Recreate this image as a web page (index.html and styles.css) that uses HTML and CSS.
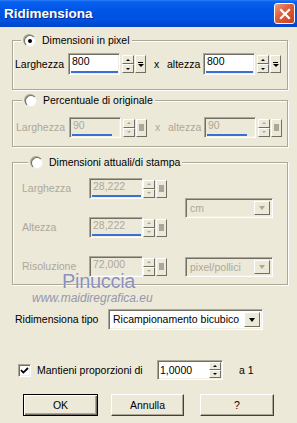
FILE: index.html
```html
<!DOCTYPE html>
<html>
  <head>
    <meta charset="utf-8">
    <link rel="stylesheet" href="styles.css">
  </head>

  <body>
    <div class="win">
      <div class="titlebar">
        <span class="title">Ridimensiona</span>
        <span class="close">
          <svg width="18" height="18" viewBox="0 0 18 18"><path d="M5 5L13 13M13 5L5 13" stroke="#fff" stroke-width="2.2" stroke-linecap="square"/></svg>
        </span>
      </div>

      <div class="content">
        <!-- pixel size -->
        <fieldset class="group g1">
          <legend><span class="radio on"></span>Dimensioni in pixel</legend>
          <div class="row">
            <span class="lbl">Larghezza</span>
            <div class="field">
              <div class="box"><span class="val">800</span><i class="bar"></i></div>
              <div class="spin"><b class="up"></b><b class="dn"></b></div>
              <div class="sq"></div>
            </div>
            <span class="x">x</span><span class="lbl2">altezza</span>
            <div class="field">
              <div class="box"><span class="val">800</span><i class="bar"></i></div>
              <div class="spin"><b class="up"></b><b class="dn"></b></div>
              <div class="sq"></div>
            </div>
          </div>
        </fieldset>

        <!-- percent -->
        <fieldset class="group g2 dis">
          <legend><span class="radio"></span>Percentuale di originale</legend>
          <div class="row">
            <span class="lbl">Larghezza</span>
            <div class="field">
              <div class="box"><span class="val">90</span><i class="bar short"></i></div>
              <div class="spin"><b class="up"></b><b class="dn"></b></div>
              <div class="sq"></div>
            </div>
            <span class="x">x</span><span class="lbl2">altezza</span>
            <div class="field">
              <div class="box"><span class="val">90</span><i class="bar short"></i></div>
              <div class="spin"><b class="up"></b><b class="dn"></b></div>
              <div class="sq"></div>
            </div>
          </div>
        </fieldset>

        <!-- print size -->
        <fieldset class="group g3 dis">
          <legend><span class="radio"></span>Dimensioni attuali/di stampa</legend>
          <div class="cols">
            <div class="leftcol">
              <div class="row">
                <span class="lbl">Larghezza</span>
                <div class="field">
                  <div class="box"><span class="val">28,222</span><i class="bar"></i></div>
                  <div class="spin"><b class="up"></b><b class="dn"></b></div>
                  <div class="sq"></div>
                </div>
              </div>
              <div class="row">
                <span class="lbl">Altezza</span>
                <div class="field">
                  <div class="box"><span class="val">28,222</span><i class="bar"></i></div>
                  <div class="spin"><b class="up"></b><b class="dn"></b></div>
                  <div class="sq"></div>
                </div>
              </div>
              <div class="row">
                <span class="lbl">Risoluzione</span>
                <div class="field">
                  <div class="box"><span class="val">72,000</span></div>
                  <div class="spin"><b class="up"></b><b class="dn"></b></div>
                  <div class="sq"></div>
                </div>
              </div>
            </div>
            <div class="rightcol">
              <div class="combo unit"><span class="txt">cm</span><span class="arr"></span></div>
              <div class="combo unit res"><span class="txt">pixel/pollici</span><span class="arr"></span></div>
            </div>
          </div>
        </fieldset>

        <div class="tipo">
          <span class="tipolbl">Ridimensiona tipo</span>
          <div class="combo main"><span class="txt">Ricampionamento bicubico</span><span class="arr"></span></div>
        </div>

        <div class="prop">
          <span class="check">
            <svg width="9" height="9" viewBox="0 0 9 9"><path d="M1 4.2L3.4 6.6L8 2" fill="none" stroke="#000" stroke-width="1.8"/></svg>
          </span>
          <span class="proplbl">Mantieni proporzioni di</span>
          <div class="box ratio">
            <span class="val">1,0000</span>
            <div class="spin"><b class="up"></b><b class="dn"></b></div>
          </div>
          <span class="a1">a 1</span>
        </div>

        <div class="btns">
          <span class="btn ok">OK</span>
          <span class="btn cancel">Annulla</span>
          <span class="btn help">?</span>
        </div>
      </div>

      <div class="wm1">Pinuccia</div>
      <div class="wm2">www.maidiregrafica.eu</div>
    </div>
  </body>
</html>
```

FILE: styles.css
```css
body {
  margin: 0;
  background-color: #ece9d8;
  font-family: "Liberation Sans", Arial, sans-serif;
  font-size: 10.5px;
  line-height: 13px;
  color: black;
  white-space: nowrap;
}

.win {
  position: relative;
  width: 297px;
  height: 423px;
  overflow: hidden;
}

/* title bar */
.titlebar {
  height: 27px;
  display: flex;
  align-items: center;
  padding-left: 4px;
  background: linear-gradient(#2a7cf5 0, #0860ee 2px, #0055e5 35%, #0052e0 75%, #0044c8 100%);
}

.title {
  color: white;
  font-weight: bold;
  font-size: 13.5px;
  text-shadow: 1px 1px #0a2a8a;
}

.close {
  margin-left: auto;
  margin-right: 2px;
  width: 19px;
  height: 19px;
  display: flex;
  align-items: center;
  justify-content: center;
  border: 1px solid white;
  border-radius: 3px;
  background: linear-gradient(135deg, #f09a80 0, #e0613f 40%, #c83d1c 100%);
}

.content {
  padding: 0 9px 0 12px;
}

/* group boxes */
.group {
  margin: 0;
  min-width: 0;
  border: 1px solid #aca899;
  box-shadow: inset 1px 1px 0 white, 1px 1px 0 white;
}

.group legend {
  display: flex;
  align-items: center;
  height: 13px;
  margin-left: 6px;
  padding: 0 2px 0 3px;
  background-color: #ece9d8;
}

.g1 {
  margin-top: 7px;
  padding: 6px 0 14px 2px;
}

.g2 {
  margin-top: 4px;
  padding: 10px 0 8px 3px;
}

.g3 {
  margin-top: 9px;
  padding: 9px 0 7px 9px;
}

.radio {
  width: 10px;
  height: 10px;
  margin-right: 6px;
  border-radius: 50%;
  background-color: white;
  border: 1px solid;
  border-color: #716f64 #f1efe2 #f1efe2 #716f64;
  box-shadow: -1px -1px 0 #aca899;
  display: flex;
  align-items: center;
  justify-content: center;
}

.radio.on::after {
  content: "";
  width: 4px;
  height: 4px;
  border-radius: 50%;
  background-color: black;
}

.row {
  display: flex;
  align-items: center;
  height: 22px;
}

.g2 .row {
  height: 21px;
}

.lbl {
  width: 53px;
}

.x {
  width: 13px;
  margin-left: 8px;
}

.lbl2 {
  width: 36px;
}

.dis .lbl,
.dis .x,
.dis .lbl2,
.dis .val {
  color: #aca899;
}

/* spin field */
.field {
  display: flex;
  align-items: center;
  height: 100%;
}

.box {
  box-sizing: border-box;
  width: 52px;
  height: 100%;
  display: flex;
  flex-direction: column;
  justify-content: space-between;
  background-color: white;
  border: 1px solid;
  border-color: #aca899 white white #aca899;
  box-shadow: inset 1px 1px 0 #716f64, inset -1px -1px 0 #f1efe2;
}

.dis .box {
  background-color: #ece9d8;
}

.val {
  padding: 1px 0 0 3px;
}

.bar {
  display: block;
  height: 2px;
  margin: 0 1px 1px 2px;
  background-color: #3a6fd3;
}

.bar.short {
  margin-right: 8px;
}

.spin {
  display: flex;
  flex-direction: column;
  width: 12px;
  height: 18px;
  margin-left: 2px;
}

.spin b {
  flex: 1;
  display: flex;
  align-items: center;
  justify-content: center;
  box-sizing: border-box;
  background-color: #ece9d8;
  border: 1px solid;
  border-color: white #716f64 #716f64 white;
}

.spin b::after {
  content: "";
  border-left: 2px solid transparent;
  border-right: 2px solid transparent;
}

.spin .up::after {
  border-bottom: 2px solid black;
}

.spin .dn::after {
  border-top: 2px solid black;
}

.dis .spin .up::after {
  border-bottom-color: #aca899;
}

.dis .spin .dn::after {
  border-top-color: #aca899;
}

.sq {
  box-sizing: border-box;
  width: 11px;
  height: 18px;
  margin-left: 1px;
  display: flex;
  flex-direction: column;
  align-items: center;
  justify-content: center;
  gap: 1px;
  background-color: #ece9d8;
  border: 1px solid;
  border-color: white #716f64 #716f64 white;
}

.sq::before {
  content: "";
  width: 5px;
  height: 1px;
  background-color: black;
}

.sq::after {
  content: "";
  border-left: 3px solid transparent;
  border-right: 3px solid transparent;
  border-top: 3px solid black;
}

.dis .sq::before {
  width: 5px;
  height: 7px;
  background-color: #aca899;
}

.dis .sq::after {
  display: none;
}

/* print size group */
.cols {
  display: flex;
}

.g3 .row {
  height: 21px;
}

.g3 .row + .row {
  margin-top: 18px;
}

.g3 .lbl {
  width: 67px;
}

.g3 .box {
  width: 54px;
}

.g3 .spin {
  margin-left: 0;
}

.rightcol {
  margin-left: 18px;
}

/* combo boxes */
.combo {
  box-sizing: border-box;
  display: flex;
  align-items: center;
  padding: 2px;
  background-color: white;
  border: 1px solid;
  border-color: #aca899 white white #aca899;
  box-shadow: inset 1px 1px 0 #716f64, inset -1px -1px 0 #f1efe2;
}

.combo .txt {
  flex: 1;
  padding-left: 2px;
}

.combo .arr {
  box-sizing: border-box;
  width: 16px;
  height: 100%;
  display: flex;
  align-items: center;
  justify-content: center;
  background-color: #ece9d8;
  border: 1px solid;
  border-color: white #716f64 #716f64 white;
}

.combo .arr::after {
  content: "";
  border-left: 3.5px solid transparent;
  border-right: 3.5px solid transparent;
  border-top: 4px solid black;
}

.unit {
  width: 88px;
  height: 20px;
  margin-top: 20px;
  background-color: #ece9d8;
}

.unit.res {
  margin-top: 39px;
}

.unit .txt {
  color: #aca899;
}

.unit .arr::after {
  border-top-color: #aca899;
}

/* bottom rows */
.tipo {
  display: flex;
  align-items: center;
  height: 21px;
  margin-top: 24px;
}

.tipolbl {
  width: 93px;
  padding-left: 3px;
}

.combo.main {
  width: 155px;
  height: 21px;
}

.prop {
  display: flex;
  align-items: center;
  height: 20px;
  margin-top: 30px;
}

.check {
  box-sizing: border-box;
  width: 13px;
  height: 13px;
  margin-left: 6px;
  display: flex;
  align-items: center;
  justify-content: center;
  background-color: white;
  border: 1px solid;
  border-color: #aca899 white white #aca899;
  box-shadow: inset 1px 1px 0 #716f64, inset -1px -1px 0 #f1efe2;
}

.proplbl {
  width: 120px;
  margin-left: 6px;
}

.box.ratio {
  width: 66px;
  flex-direction: row;
  align-items: center;
  justify-content: space-between;
  padding-right: 1px;
}

.box.ratio .val {
  padding: 0 0 0 2px;
}

.box.ratio .spin {
  height: 16px;
}

.a1 {
  margin-left: 16px;
}

.btns {
  display: flex;
  margin-top: 14px;
  margin-left: 11px;
}

.btn {
  box-sizing: border-box;
  height: 22px;
  display: flex;
  align-items: center;
  justify-content: center;
  background-color: #ece9d8;
  border: 1px solid;
  border-color: white #404040 #404040 white;
  box-shadow: inset -1px -1px 0 #aca899;
}

.btn.ok {
  width: 75px;
  border-color: black;
  box-shadow: inset 1px 1px 0 white, inset -1px -1px 0 #716f64, inset -2px -2px 0 #aca899;
}

.btn.cancel {
  width: 73px;
  margin-left: 13px;
}

.btn.help {
  width: 74px;
  margin-left: 16px;
}

/* watermark over the dialog */
.wm1 {
  position: absolute;
  left: 62px;
  top: 271px;
  font-size: 20px;
  line-height: 20px;
  letter-spacing: -0.3px;
  color: #8a90bf;
  text-shadow: 0 0 1px white;
}

.wm2 {
  position: absolute;
  left: 32px;
  top: 291px;
  font-size: 12px;
  line-height: 14px;
  font-style: italic;
  color: #9597b0;
}
```
